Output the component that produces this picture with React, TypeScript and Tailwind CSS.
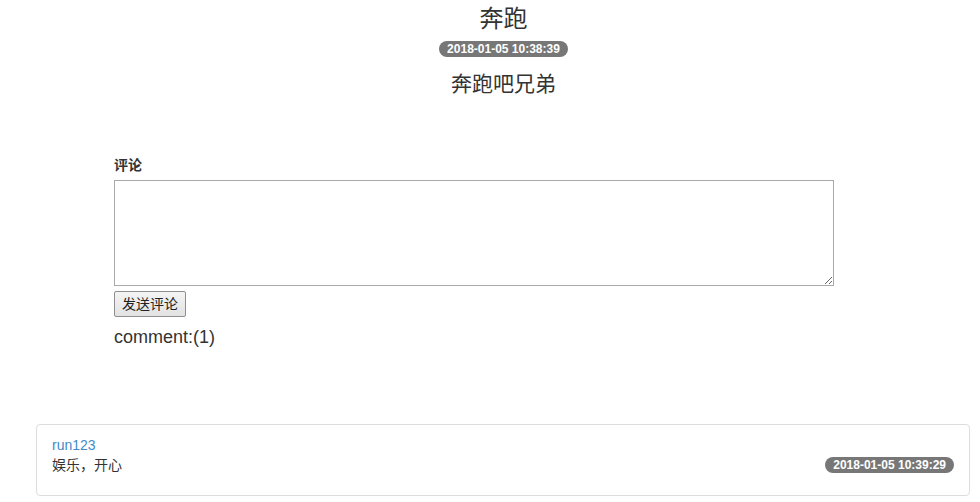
const font = "font-['Liberation_Sans','Noto_Sans_CJK_SC',sans-serif]";

function Badge({ text }: { text: string }) {
  return (
    <span className="inline-block rounded-[10px] bg-[#777] px-[8px] py-[2px] text-[12px] font-bold leading-[12px] text-white">
      {text}
    </span>
  );
}

export default function App() {
  return (
    <div className={`${font} w-[980px] bg-white text-[14px] text-[#333]`}>
      <div className="flex flex-col items-center pl-[27px] pt-[6px]">
        <h1 className="text-[24px] leading-[26px]">奔跑</h1>
        <div className="mt-[9px] flex">
          <Badge text="2018-01-05 10:38:39" />
        </div>
        <p className="mt-[16px] text-[21px] leading-[22px]">奔跑吧兄弟</p>
      </div>

      <div className="ml-[114px] mt-[60px] w-[720px]">
        <label className="block text-[14px] font-bold leading-[20px]">评论</label>
        <textarea className="mt-[5px] block h-[106px] w-[720px] resize border border-[#a9a9a9] bg-white" />
        <button className="mt-[5px] block h-[26px] rounded-[2px] border border-[#8f8f8f] bg-[#eee] bg-gradient-to-b from-[#f4f4f4] to-[#e2e2e2] px-[7px] text-[14px] leading-[20px] text-[#222]">
          发送评论
        </button>
        <p className="mt-[9px] text-[18px] leading-[22px]">comment:(1)</p>
      </div>

      <div className="ml-[36px] mr-[10px] mt-[76px] rounded-[4px] border border-[#ddd] px-[15px] pb-[20px] pt-[10px]">
        <a className="block leading-[20px] text-[#428bca]">run123</a>
        <div className="flex items-center justify-between">
          <p className="leading-[20px]">娱乐，开心</p>
          <Badge text="2018-01-05 10:39:29" />
        </div>
      </div>
    </div>
  );
}
